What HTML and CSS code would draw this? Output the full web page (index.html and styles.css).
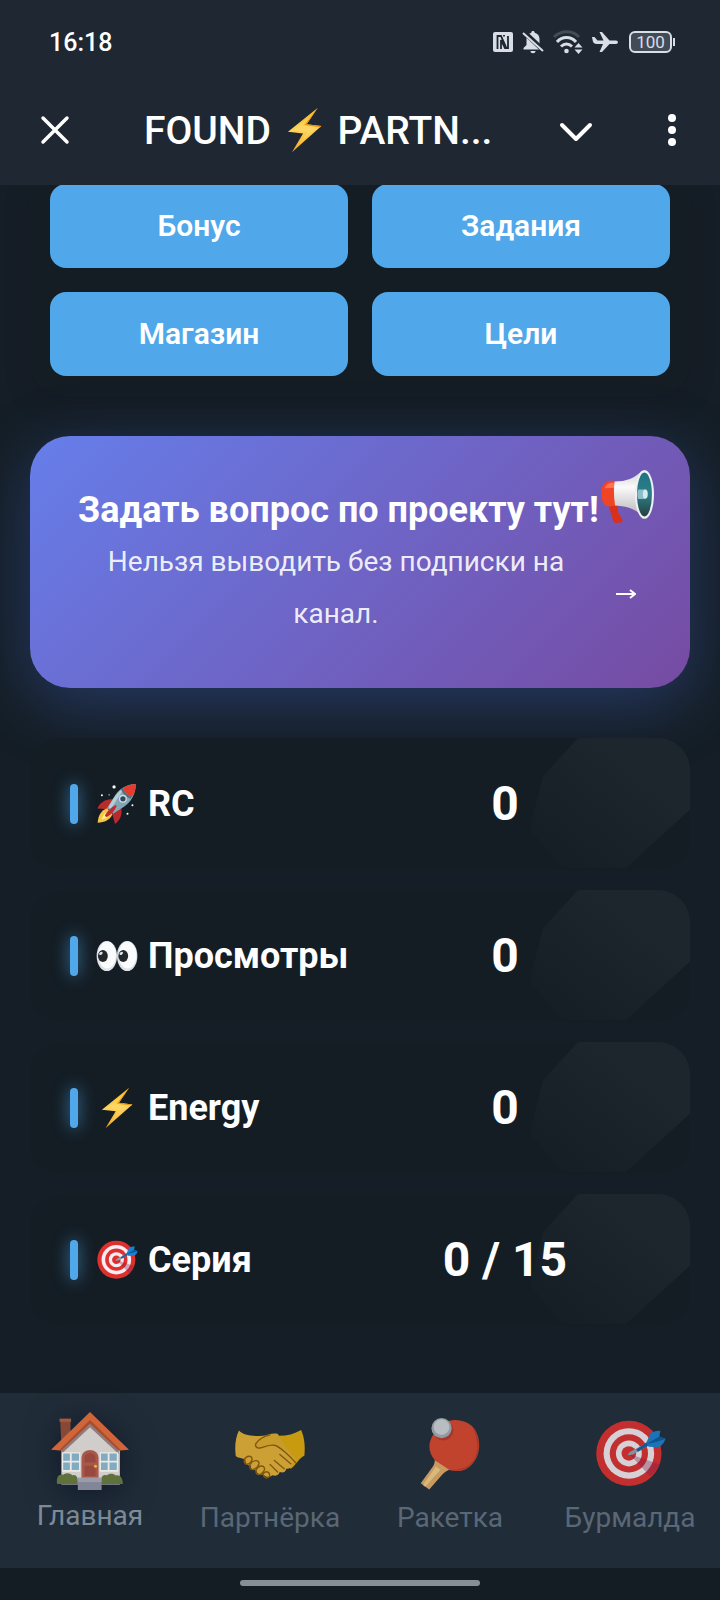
FILE: index.html
```
<!DOCTYPE html>
<html lang="ru">
<head>
  <meta charset="utf-8">
  <meta name="viewport" content="width=device-width, initial-scale=1">
  <title>FOUND PARTNERS</title>
  <link rel="stylesheet" href="styles.css">
</head>
<body>
  <!-- shared icons -->
  <svg class="sprite" aria-hidden="true">
    <defs>
      <linearGradient id="gold" x1="0" y1="0" x2="0" y2="1">
        <stop offset="0" stop-color="#f9b51c"/>
        <stop offset="0.5" stop-color="#fdd35a"/>
        <stop offset="1" stop-color="#f6a514"/>
      </linearGradient>
      <linearGradient id="horn" x1="0" y1="0" x2="0" y2="1">
        <stop offset="0" stop-color="#1f7482"/>
        <stop offset="0.5" stop-color="#2d7e88"/>
        <stop offset="1" stop-color="#263f3d"/>
      </linearGradient>
      <linearGradient id="white-body" x1="0" y1="0" x2="0" y2="1">
        <stop offset="0" stop-color="#d2d2d4"/>
        <stop offset="0.35" stop-color="#fafafa"/>
        <stop offset="1" stop-color="#b4b4ba"/>
      </linearGradient>
    </defs>
    <symbol id="bolt" viewBox="0 0 128 128">
      <path d="M101 2 18 69l42 5-31 52 82-73-41-5z" fill="url(#gold)"/>
      <path d="M92 16 33 65l38 5-26 40 51-53-38-6z" fill="#ffdf7a" opacity=".35"/>
      <path d="M101 2 70 48l41 5-3 3-44-6z" fill="#e8930c"/>
    </symbol>
    <symbol id="target" viewBox="0 0 128 128">
      <circle cx="62" cy="63" r="58" fill="#e0302e"/>
      <circle cx="62" cy="63" r="45" fill="#f6eef2"/>
      <circle cx="62" cy="63" r="34" fill="#e0302e"/>
      <circle cx="62" cy="63" r="23" fill="#f6eef2"/>
      <circle cx="62" cy="63" r="13" fill="#e0302e"/>
      <path d="m63 64 37 40c8-7 13-14 16-22z" fill="#8a1b4b" opacity=".35"/>
      <path d="m60 66 3-5 27-15 4 5-25 14z" fill="#93a4b4"/>
      <path d="m75 56 23-16 4 6-24 14z" fill="#1d5f9c"/>
      <path d="m93 44 7-16c6-5 13-6 18-5l-2 10 11 4c-2 7-6 12-12 15l-18-1z" fill="#1a80cf"/>
      <path d="m94 46 22-13 11 4-15 5z" fill="#0c5a9e"/>
    </symbol>
  </svg>

  <header class="top">
    <div class="status">
      <time class="clock">16:18</time>
      <div class="status-icons" aria-hidden="true">
        <svg width="20" height="22" viewBox="0 0 20 22">
          <rect y="1" width="20" height="20" rx="2" fill="#d8dde6"/>
          <path d="M4.500 18V5h3.500l5 11M11 5.500V4m4 1v12h-3L8 9v9" fill="none" stroke="#1e2732" stroke-width="1.800"/>
        </svg>
        <svg width="22" height="24" viewBox="0 0 22 24">
          <path d="M11 1c1 0 1.700.7 1.700 1.700C16 3.500 17.500 6 17.500 9v6l3 3v1.500H1.500V18l3-3V9c0-3 1.500-5.500 4.800-6.300C9.300 1.700 10 1 11 1zM8.500 21h5c0 1.300-1 2.300-2.500 2.300S8.500 22.300 8.500 21z" fill="#d8dde6"/>
          <path d="m2 2 19 18" stroke="#1e2732" stroke-width="5"/>
          <path d="m1 3 20 18" stroke="#d8dde6" stroke-width="2"/>
        </svg>
        <svg width="30" height="24" viewBox="0 0 30 24">
          <g fill="none" stroke-width="3">
            <path d="M1 7c7-7 19-7 25 0" stroke="#424c58"/>
            <path d="M4 12c5-6 14-6 19 0M8 16.500c3.500-3.500 7.500-3.500 11 0" stroke="#d8dde6"/>
          </g>
          <circle cx="13.500" cy="21" r="2.300" fill="#d8dde6"/>
          <path d="m25.500 13 4 4.500h-8zM25.500 24l4-4.500h-8z" fill="#d8dde6"/>
        </svg>
        <svg width="26" height="22" viewBox="0 0 26 22">
          <path d="M0 6h2.500l3 3.500h6L7.500 1H10l7.500 8.500H24c2.500 0 2.500 3.500 0 3.500h-6.500L10 21H7.500l3.500-8H5C2 13 1 11.500.8 10z" fill="#d8dde6"/>
        </svg>
        <span class="battery">100</span>
      </div>
    </div>
    <div class="titlebar">
      <button class="icon-btn" aria-label="Закрыть">
        <svg width="30" height="30" viewBox="0 0 30 30"><path d="m3 3 24 24M27 3 3 27" stroke="#fff" stroke-width="3.500" stroke-linecap="round"/></svg>
      </button>
      <h1>FOUND <svg class="title-bolt" role="img" aria-label="⚡"><use href="#bolt"/></svg> PARTN...</h1>
      <button class="icon-btn" aria-label="Свернуть">
        <svg width="34" height="30" viewBox="0 0 34 30"><path d="m3 10 14 14 14-14" fill="none" stroke="#fff" stroke-width="4" stroke-linecap="round" stroke-linejoin="round"/></svg>
      </button>
      <button class="icon-btn menu-btn" aria-label="Меню">
        <svg width="10" height="34" viewBox="0 0 10 34" fill="#fff"><circle cx="5" cy="5" r="4"/><circle cx="5" cy="17" r="4"/><circle cx="5" cy="29" r="4"/></svg>
      </button>
    </div>
  </header>

  <main>
    <section class="actions">
      <button>Бонус</button>
      <button>Задания</button>
      <button>Магазин</button>
      <button>Цели</button>
    </section>

    <a class="banner" href="#">
      <span class="banner-text">
        <strong>Задать вопрос по проекту тут!</strong>
        <span class="banner-note">Нельзя выводить без подписки на канал.</span>
      </span>
      <svg class="arrow" viewBox="0 0 20 12" aria-hidden="true"><path d="M0 6h18M14 2l5 4-5 4" fill="none" stroke="#fff" stroke-width="2"/></svg>
      <svg class="megaphone" viewBox="0 0 128 128" aria-hidden="true">
        <path d="M17 80h22l3 24 10 16c1 4-1 6-5 7l-11 1c-4 0-6-2-7-6z" fill="#d9301c"/>
        <path d="M36 27C16 24 5 30 2 45c-3 16 0 31 6 38 6 6 16 6 28 3z" fill="#f04427"/>
        <path d="M34 31c-14-1-22 3-25 13l25-1z" fill="#ff7350"/>
        <path d="M33 28c28 0 48-8 66-26l4 112C84 94 62 87 34 86c-3-20-4-40-1-58z" fill="url(#white-body)"/>
        <ellipse cx="105" cy="59" rx="23" ry="59" fill="#eef1f4"/>
        <ellipse cx="105" cy="59" rx="18" ry="53" fill="url(#horn)"/>
        <path d="M90 47h17c5 3 6 19 0 23H90c-3-7-3-16 0-23z" fill="#8bbdca"/>
        <ellipse cx="107" cy="58" rx="6" ry="11" fill="#d4ebef"/>
      </svg>
    </a>

    <section class="stats">
      <div class="stat">
        <span class="stat-label">
          <svg viewBox="0 0 128 128" aria-hidden="true">
            <path d="M52 50C30 47 12 60 4 78l32 2zM77 74c4 22-3 40-19 51l-9-31z" fill="#b92a2d"/>
            <path d="M34 77C16 83 7 98 5 121c21-1 38-9 45-26z" fill="#f8c443"/>
            <path d="M35 87c-10 6-15 14-18 24 12-2 21-7 26-16z" fill="#fff08a"/>
            <path d="M121 3C91 4 69 19 55 43L34 76l18 18 32-21c23-15 38-40 37-70z" fill="#82a6b5"/>
            <path d="M88 13C72 22 62 34 54 46L38 73l7 7z" fill="#b5cdd6"/>
            <path d="M121 3c-15 1-28 5-39 12 5 13 14 22 27 27 9-12 13-24 12-39z" fill="#e43b2d"/>
            <path d="M82 15c5 13 14 22 27 27l-4 6C92 43 82 33 76 20z" fill="#546f7c"/>
            <circle cx="82" cy="48" r="12" fill="#cfdee4"/>
            <circle cx="82" cy="48" r="8" fill="#34485a"/>
            <path d="M60 67c-14 7-26 18-33 32 2 4 5 5 8 4 13-9 23-20 28-33z" fill="#c32933"/>
            <g fill="#fff"><circle cx="55" cy="12" r="5"/><circle cx="18" cy="37" r="3"/><circle cx="111" cy="68" r="3"/><circle cx="96" cy="94" r="3"/><circle cx="40" cy="36" r="2"/></g>
          </svg>
          RC
        </span>
        <span class="stat-value">0</span>
      </div>
      <div class="stat">
        <span class="stat-label">
          <svg viewBox="0 0 128 128" aria-hidden="true">
            <g fill="#dfe3e8"><ellipse cx="33" cy="64" rx="31" ry="46"/><ellipse cx="95" cy="64" rx="31" ry="46"/></g>
            <g fill="#fafbfd"><ellipse cx="34" cy="61" rx="27" ry="41"/><ellipse cx="96" cy="61" rx="27" ry="41"/></g>
            <g fill="#23282b"><ellipse cx="21" cy="64" rx="15" ry="18"/><ellipse cx="83" cy="64" rx="15" ry="18"/></g>
            <g fill="#dfe3e8"><ellipse cx="15" cy="56" rx="6" ry="4" transform="rotate(-35 15 56)"/><ellipse cx="77" cy="56" rx="6" ry="4" transform="rotate(-35 77 56)"/></g>
          </svg>
          Просмотры
        </span>
        <span class="stat-value">0</span>
      </div>
      <div class="stat">
        <span class="stat-label">
          <svg aria-hidden="true"><use href="#bolt"/></svg>
          Energy
        </span>
        <span class="stat-value">0</span>
      </div>
      <div class="stat">
        <span class="stat-label">
          <svg aria-hidden="true"><use href="#target"/></svg>
          Серия
        </span>
        <span class="stat-value">0 / 15</span>
      </div>
    </section>
  </main>

  <nav class="tabs">
    <a class="tab active" href="#">
      <svg viewBox="0 0 128 128" aria-hidden="true">
        <path d="M15 11h17v30L17 54z" fill="#874936"/><path d="M14 11h19v5H14z" fill="#a55a3e"/>
        <path d="m64 14 49 48v57H17V62z" fill="#d0cdca"/>
        <path d="m64 14-47 44v11l47-44 47 44V58z" fill="#917b7b"/>
        <path d="M64 0 0 62l15 1 49-47 49 47 15-1z" fill="#cf6538"/>
        <path d="m64 13-51 50h4l47-44 47 44h4z" fill="#a94b2c"/>
        <g fill="#e9e9e6"><path d="M18 66h30v32H18zM80 66h30v32H80z"/></g>
        <path d="M20 68h11v12H20zM34 68h12v12H34zM20 83h11v12H20zM34 83h12v12H34zM82 68h11v12H82zM96 68h12v12H96zM82 83h11v12H82zM96 83h12v12H96z" fill="#83abc0"/>
        <path d="M50 108V76c0-18 28-18 28 0v32z" fill="#a9574b"/>
        <path d="M55 83V75c0-10 18-10 18 0v8zM55 88h18v17H55z" fill="#97493f"/>
        <circle cx="73" cy="89" r="2.500" fill="#e9b347"/>
        <path d="M10 118c-2-12 4-17 10-15 5-4 12-3 15 1 6-2 10 3 9 14zM82 118c-1-11 3-16 9-14 5-4 12-3 15 0 7-2 12 4 12 14z" fill="#5f723c"/>
        <path d="M44 108h39v20H44z" fill="#828698"/><path d="M44 108h39v7H44z" fill="#9a9caa"/>
      </svg>
      <span>Главная</span>
    </a>
    <a class="tab" href="#">
      <svg viewBox="-2 -2 132 132" aria-hidden="true">
        <path d="M121 20c6 13 8 30 6 47-10 4-15 17-25 24L58 60l6-31c20 4 40 1 57-9z" fill="#c79a10"/>
        <path d="M7 21c9 10 28 12 57 8l20 16 27 28c-1 7-4 8-8 7 1 8-3 12-9 11-2 7-7 8-12 6-3 7-9 8-14 6-6 6-13 2-17-2-8 2-12-3-12-7-8 0-11-4-10-9-8 0-11-5-10-11C8 70 1 71 1 66-1 49 1 34 7 21z" fill="#cca034"/>
        <path d="M78 27C64 24 49 31 38 44c-3 5 1 10 7 9 10-2 18-7 27-5 10 1 22 8 32 19" fill="#c89c2b"/>
        <g fill="none" stroke="#80570f" stroke-width="2.500" stroke-linecap="round">
          <path d="M64 29C54 31 43 38 38 45c-2 5 2 9 7 8 10-2 18-7 27-5 9 1 31 23 39 32"/>
          <path d="m82 65 20 17M72 76l18 15M64 83l14 14"/>
          <path d="M17 74c5-9 15-7 14 1-4 9-16 12-14-1zM27 84c6-10 17-10 17-2-4 11-19 16-17 2zM38 94c6-11 17-10 16-1-5 10-16 13-16 1zM51 101c5-8 14-4 12 4-4 5-10 4-12-4z"/>
        </g>
      </svg>
      <span>Партнёрка</span>
    </a>
    <a class="tab" href="#">
      <svg viewBox="0 0 128 128" aria-hidden="true">
        <path d="m37 74 28 17c-6 2-11 5-15 10l-23 26-15-11 21-29c3-4 4-8 4-13z" fill="#c79b60"/>
        <path d="m39 86 8 6-27 30-4-3z" fill="#dab87c"/>
        <path d="M37 75c-13-16-12-31-2-47C51 0 81-3 103 14c18 18 16 52 1 67-11 14-25 15-40 12z" fill="#c2432d"/>
        <path d="M103 15c17 18 15 51 1 66-10 12-25 15-38 11 45 1 57-37 37-77z" fill="#a83a2b"/>
        <circle cx="52" cy="22" r="18" fill="#a5372a"/>
        <circle cx="49" cy="18" r="18" fill="#929ba3"/><circle cx="49" cy="16" r="14" fill="#b7bdc1"/>
      </svg>
      <span>Ракетка</span>
    </a>
    <a class="tab" href="#">
      <svg class="dim" aria-hidden="true"><use href="#target"/></svg>
      <span>Бурмалда</span>
    </a>
  </nav>
  <footer class="gesture"></footer>
</body>
</html>
```

FILE: styles.css
```
* {
  box-sizing: border-box;
}

body {
  margin: 0;
  min-height: 100vh;
  display: flex;
  flex-direction: column;
  background-color: #151e26;
  color: #fff;
  font-family: Roboto, "Liberation Sans", sans-serif;
}

button {
  border: none;
  color: #fff;
  font-family: inherit;
  cursor: pointer;
}

a {
  color: inherit;
  text-decoration: none;
}

.sprite {
  position: absolute;
  width: 0;
  height: 0;
}

/* header */

.top {
  position: relative;
  z-index: 1;
  background-color: #1e2732;
}

.status {
  height: 84px;
  padding: 0 46px 0 49px;
  display: flex;
  align-items: center;
  justify-content: space-between;
}

.clock {
  font-size: 25px;
  font-weight: 500;
}

.status-icons {
  display: flex;
  align-items: center;
  gap: 9px;
}

.battery {
  position: relative;
  width: 43px;
  height: 22px;
  margin: 0 2px 0 2px;
  border: 2px solid #d8dde6;
  border-radius: 6px;
  background-color: #424c58;
  color: #d8dde6;
  font-size: 17px;
  line-height: 18px;
  text-align: center;
}

.battery::after {
  content: "";
  position: absolute;
  right: -5px;
  top: 5px;
  width: 2px;
  height: 8px;
  background-color: #d8dde6;
}

.titlebar {
  height: 101px;
  padding: 0 43px 10px 40px;
  display: flex;
  align-items: center;
}

.titlebar h1 {
  flex: 1;
  margin: 0 0 0 74px;
  padding-top: 2px;
  font-size: 39px;
  font-weight: 500;
  line-height: 48px;
  white-space: nowrap;
}

.title-bolt {
  width: 47px;
  height: 46px;
  vertical-align: -9px;
}

.icon-btn {
  padding: 0;
  background: none;
  display: flex;
}

.menu-btn {
  margin-left: 74px;
}

/* content */

main {
  flex: 1;
  margin-top: -1px;
  padding: 0 30px;
}

.actions {
  display: grid;
  grid-template-columns: 1fr 1fr;
  gap: 24px;
  padding: 0 20px 20px;
  background-color: #141d24;
  border-radius: 0 0 32px 32px;
  box-shadow: 0 8px 24px rgba(22, 16, 28, 0.3);
}

.actions button {
  height: 84px;
  padding-bottom: 3px;
  border-radius: 16px;
  background-color: #50a7ea;
  font-size: 30px;
  font-weight: 600;
}

.banner {
  position: relative;
  display: flex;
  align-items: center;
  justify-content: space-between;
  margin-top: 40px;
  padding: 48px;
  border-radius: 40px;
  background: linear-gradient(135deg, #667eea, #764ba2);
  box-shadow: 0 16px 64px rgba(70, 105, 210, 0.36);
}

.banner-text {
  width: 520px;
  text-align: center;
}

.banner-text strong {
  display: block;
  font-size: 36px;
  font-weight: 700;
  line-height: 52px;
  white-space: nowrap;
}

.banner-note {
  display: block;
  padding-right: 4px;
  color: rgba(255, 255, 255, 0.9);
  font-size: 28px;
  line-height: 52px;
}

.arrow {
  width: 20px;
  margin: 64px 6px 0 0;
}

.megaphone {
  position: absolute;
  top: 34px;
  right: 36px;
  width: 53px;
  height: 53px;
}

.stats {
  position: relative;
  display: grid;
  gap: 20px;
  margin-top: 50px;
}

.stat {
  position: relative;
  overflow: hidden;
  display: grid;
  grid-template-columns: 1fr 1fr;
  align-items: center;
  height: 132px;
  padding: 0 40px;
  border-radius: 32px;
  background-color: #141d24;
}

/* faint highlight in the card corner */
.stat::after {
  content: "";
  position: absolute;
  top: 0;
  right: 0;
  width: 160px;
  height: 130px;
  background: linear-gradient(to bottom left, rgba(255, 255, 255, 0.04) 30%, rgba(255, 255, 255, 0));
  clip-path: polygon(30% 0, 100% 0, 100% 55%, 60% 100%, 20% 100%, 0 70%, 8% 30%);
}

.stat-label {
  display: flex;
  align-items: center;
  gap: 10px;
  font-size: 36px;
  font-weight: 700;
}

.stat-label::before {
  content: "";
  width: 8px;
  height: 40px;
  margin-right: 8px;
  border-radius: 4px;
  background-color: #50a7ea;
  box-shadow: 0 0 16px rgba(80, 167, 234, 0.7);
}

.stat-label svg {
  width: 42px;
  height: 42px;
}

.stat-value {
  padding-bottom: 2px;
  font-size: 48px;
  font-weight: 700;
  text-align: center;
}

/* bottom navigation */

.tabs {
  display: grid;
  grid-template-columns: repeat(4, 1fr);
  height: 175px;
  padding-top: 25px;
  background-color: #212c39;
}

.tab {
  display: flex;
  flex-direction: column;
  align-items: center;
  gap: 10px;
  color: #5a6775;
  font-size: 28px;
  line-height: 36px;
}

.tab svg {
  width: 72px;
  height: 72px;
}

.tab .dim {
  opacity: 0.85;
}

.tab.active {
  margin-top: -6px;
  gap: 8px;
  color: #7f8d9a;
}

.tab.active svg {
  width: 78px;
  height: 78px;
  filter: drop-shadow(0 4px 16px rgba(10, 20, 35, 0.8));
}

.gesture {
  display: flex;
  justify-content: center;
  height: 32px;
  padding-top: 12px;
  background-color: #141d24;
}

.gesture::before {
  content: "";
  width: 240px;
  height: 6px;
  border-radius: 3px;
  background-color: #868f95;
}
```
